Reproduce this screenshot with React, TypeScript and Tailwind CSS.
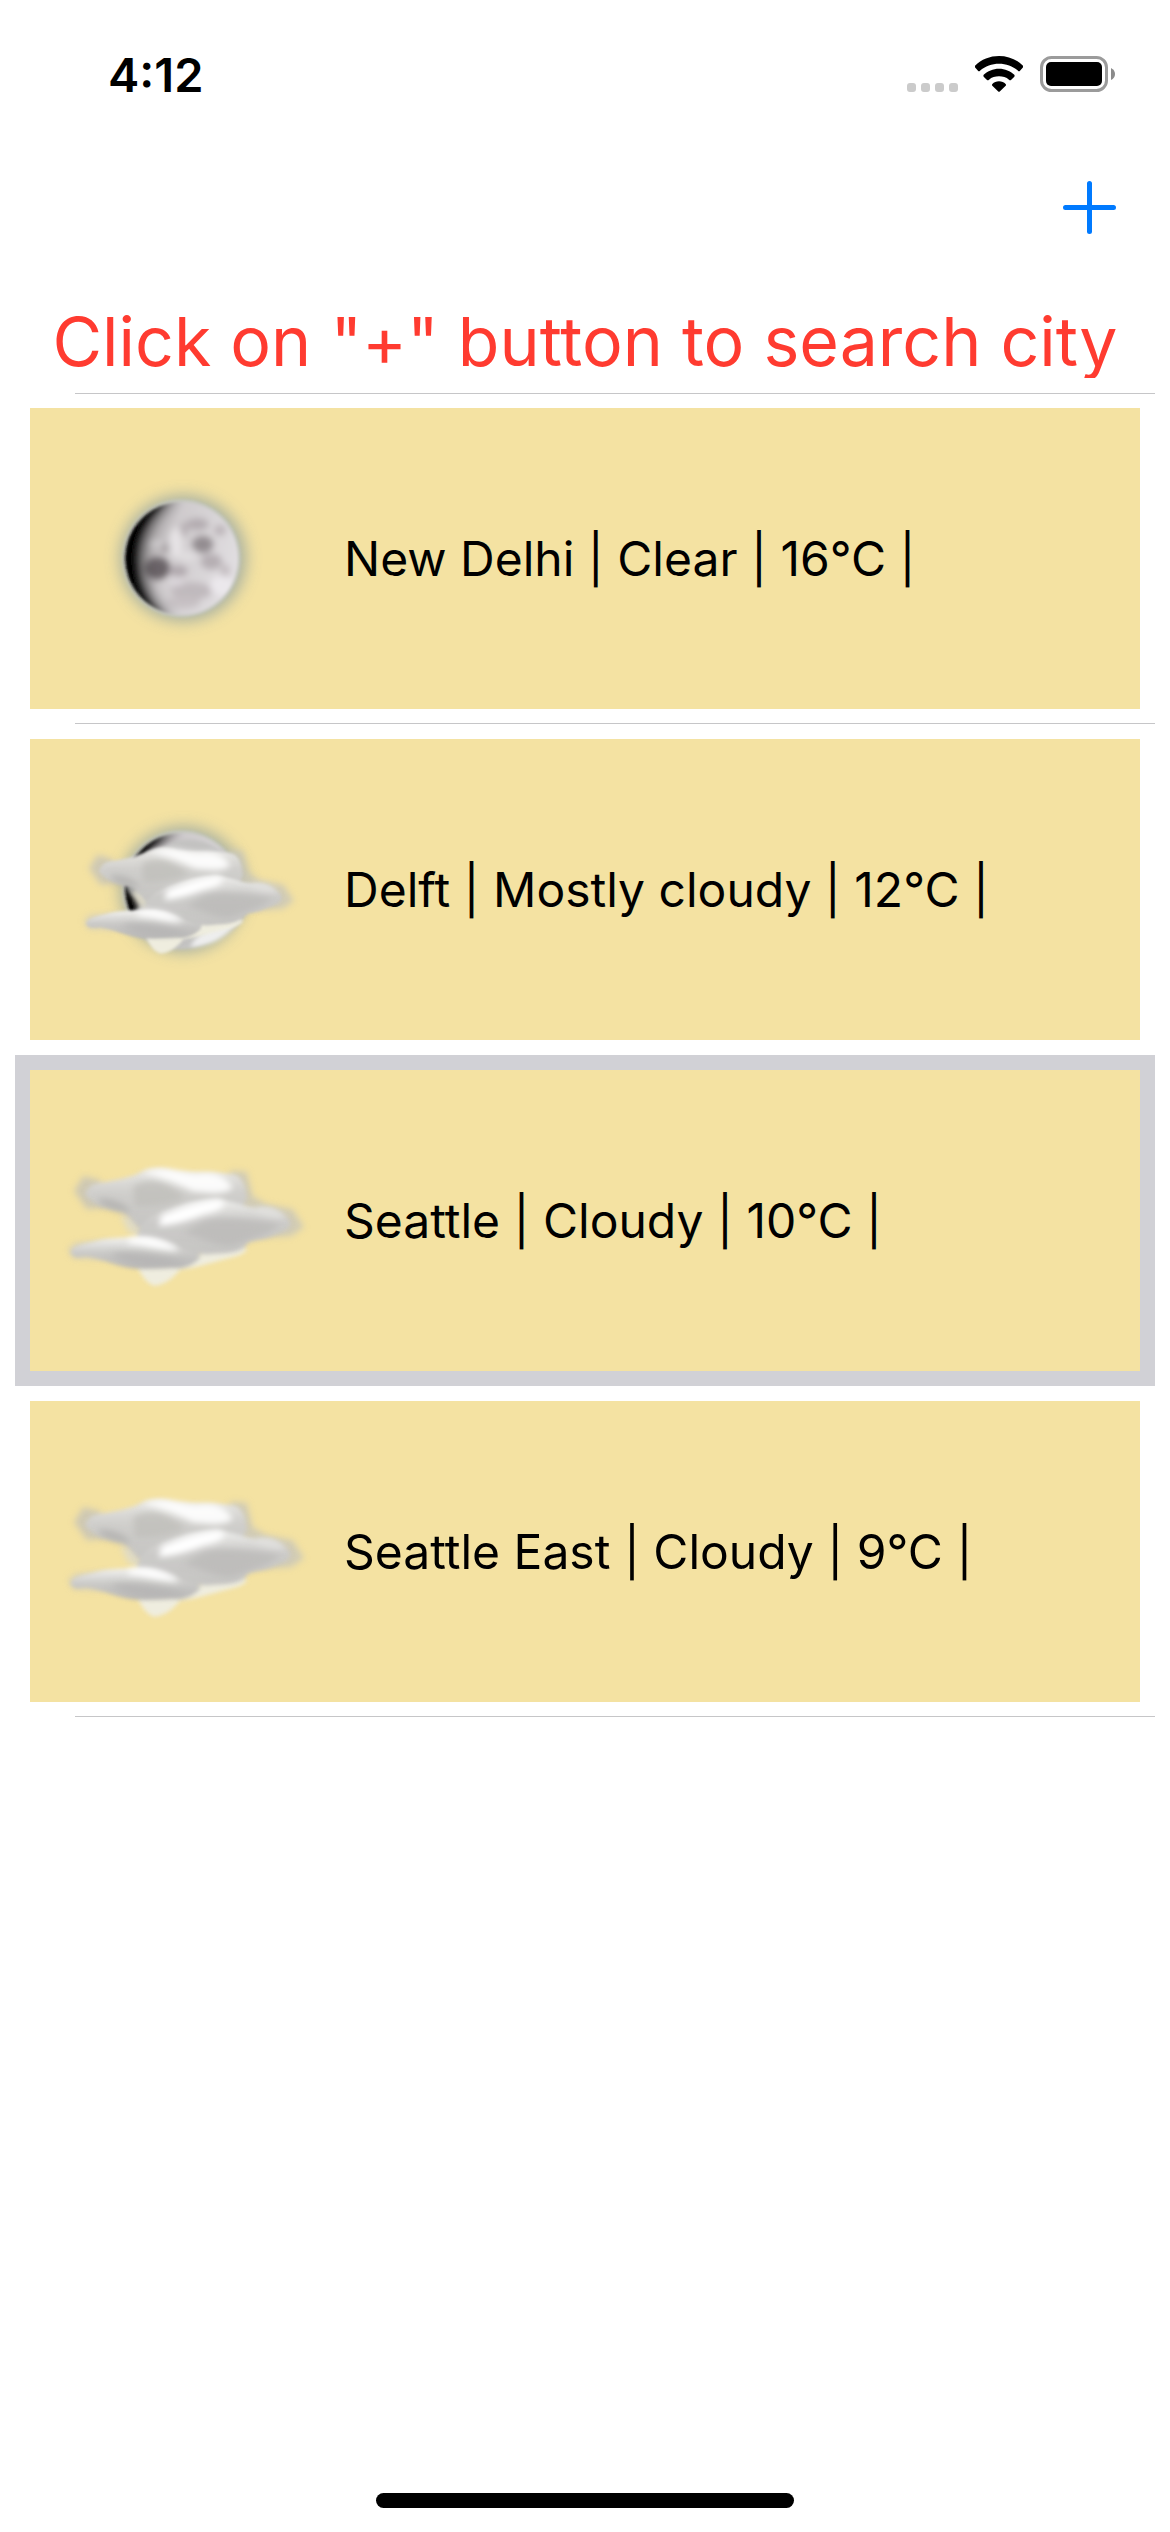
import React from "react";

type Condition = "clear" | "mostlyCloudy" | "cloudy";

const cities: { text: string; condition: Condition; selected: boolean; divider: boolean }[] = [
  { text: "New Delhi | Clear | 16°C |", condition: "clear", selected: false, divider: true },
  { text: "Delft | Mostly cloudy | 12°C |", condition: "mostlyCloudy", selected: false, divider: false },
  { text: "Seattle | Cloudy | 10°C |", condition: "cloudy", selected: true, divider: false },
  { text: "Seattle East | Cloudy | 9°C |", condition: "cloudy", selected: false, divider: true },
];

function Moon({ id }: { id: string }) {
  return (
    <g>
      <defs>
        <clipPath id={id + "disc"}>
          <circle cx="395" cy="268" r="169" />
        </clipPath>
        <linearGradient id={id + "face"} x1="0" y1="0.3" x2="1" y2="0.6">
          <stop offset="0" stopColor="#8d898a" />
          <stop offset="0.4" stopColor="#cfcbcd" />
          <stop offset="1" stopColor="#e2dfe2" />
        </linearGradient>
        <filter id={id + "halo"} x="-30%" y="-30%" width="160%" height="160%">
          <feGaussianBlur stdDeviation="22" />
        </filter>
        <filter id={id + "edge"} x="-20%" y="-20%" width="140%" height="140%">
          <feGaussianBlur stdDeviation="4" />
        </filter>
        <filter id={id + "spots"} x="-40%" y="-40%" width="180%" height="180%">
          <feGaussianBlur stdDeviation="10" />
        </filter>
        <filter id={id + "shade"} x="-40%" y="-40%" width="180%" height="180%">
          <feGaussianBlur stdDeviation="22" />
        </filter>
      </defs>
      <circle cx="399" cy="268" r="190" fill="#8fa0a2" opacity="0.75" filter={`url(#${id}halo)`} />
      <circle cx="395" cy="268" r="177" fill="#c9cbc4" opacity="0.8" filter={`url(#${id}edge)`} />
      <g filter={`url(#${id}edge)`}>
        <g clipPath={`url(#${id}disc)`}>
          <rect x="220" y="90" width="350" height="350" fill={`url(#${id}face)`} />
          <g filter={`url(#${id}spots)`}>
            <ellipse cx="458" cy="226" rx="32" ry="26" fill="#938c90" />
            <ellipse cx="442" cy="166" rx="34" ry="18" fill="#b3acb0" />
            <ellipse cx="510" cy="184" rx="18" ry="16" fill="#bbb4b8" />
            <ellipse cx="402" cy="182" rx="12" ry="22" fill="#b7b0b4" />
            <ellipse cx="484" cy="278" rx="32" ry="24" fill="#b5aeb2" />
            <ellipse cx="525" cy="305" rx="14" ry="20" fill="#c3bcc0" />
            <ellipse cx="322" cy="298" rx="38" ry="34" fill="#6a6467" />
            <ellipse cx="385" cy="306" rx="28" ry="17" fill="#b0a8ad" />
            <ellipse cx="425" cy="366" rx="62" ry="26" fill="#c0b9bd" />
            <ellipse cx="400" cy="400" rx="50" ry="18" fill="#c6c0c3" />
            <ellipse cx="345" cy="236" rx="20" ry="15" fill="#a8a2a5" />
            <ellipse cx="378" cy="222" rx="20" ry="46" fill="#e6e3e5" />
            <ellipse cx="414" cy="262" rx="28" ry="16" fill="#e0dddf" />
            <ellipse cx="378" cy="338" rx="24" ry="13" fill="#dcd7db" />
            <ellipse cx="318" cy="224" rx="24" ry="12" fill="#cfccce" />
            <ellipse cx="516" cy="350" rx="36" ry="30" fill="#ebe8ec" />
          </g>
          <path
            d="M375 80H205V460H365C305 410 272 350 270 276C268 205 300 140 375 80Z"
            fill="#000"
            opacity="0.85"
            filter={`url(#${id}shade)`}
          />
          <path d="M345 95H205V450H340C272 390 256 340 254 276C252 200 280 150 345 95Z" fill="#000" filter={`url(#${id}spots)`} />
        </g>
      </g>
    </g>
  );
}

function Clouds({ id }: { id: string }) {
  return (
    <g>
      <defs>
        <linearGradient id={id + "top"} x1="0" y1="0" x2="0" y2="1">
          <stop offset="0" stopColor="#eae9e6" />
          <stop offset="0.35" stopColor="#d0cfcc" />
          <stop offset="1" stopColor="#c2c1bf" />
        </linearGradient>
        <linearGradient id={id + "mid"} x1="0" y1="0" x2="0" y2="1">
          <stop offset="0" stopColor="#eeeeec" />
          <stop offset="0.4" stopColor="#cccbc9" />
          <stop offset="1" stopColor="#c6c5c3" />
        </linearGradient>
        <linearGradient id={id + "low"} x1="0" y1="0" x2="0" y2="1">
          <stop offset="0" stopColor="#f1f1ef" />
          <stop offset="0.5" stopColor="#c9c8c6" />
          <stop offset="1" stopColor="#b8b7b6" />
        </linearGradient>
        <filter id={id + "soft"} x="-20%" y="-20%" width="140%" height="140%">
          <feGaussianBlur stdDeviation="6" />
        </filter>
        <filter id={id + "wisp"} x="-20%" y="-20%" width="140%" height="140%">
          <feGaussianBlur stdDeviation="10" />
        </filter>
        <filter id={id + "light"} x="-30%" y="-60%" width="160%" height="220%">
          <feGaussianBlur stdDeviation="10" />
        </filter>
      </defs>
      <g filter={`url(#${id}wisp)`}>
        <path d="M72 150L100 105L150 118L170 200L110 205Z" fill="#c6c3b8" opacity="0.8" />
        <path d="M540 90L590 92L608 165L650 190L728 205L762 258L725 285L640 290L540 210Z" fill="#c8c5ba" opacity="0.8" />
        <path d="M55 325L75 305L180 300L160 355L70 352Z" fill="#cfccc0" opacity="0.7" />
        <path d="M210 220L262 230L280 290L235 272Z" fill="#dedac8" opacity="0.9" />
      </g>
      <g filter={`url(#${id}soft)`}>
        <path
          d="M255 368C300 360 350 372 390 372C430 366 460 325 500 320L592 322C585 345 540 350 505 360C460 372 430 382 390 386C370 410 345 432 312 434C285 425 275 400 255 368Z"
          fill="#efeddf"
        />
        <path
          d="M105 160C115 132 135 126 160 124C190 118 225 112 255 102C285 84 330 74 370 90C420 98 500 92 550 100C580 108 588 140 590 175L560 225L300 285C262 270 250 232 215 212C170 204 130 192 105 160Z"
          fill={`url(#${id}top)`}
        />
        <path
          d="M262 290C260 240 310 225 345 210C400 188 460 172 510 176C550 180 580 196 620 200C660 196 690 208 718 238C730 262 700 272 670 282C640 298 610 298 592 305C588 328 545 338 500 338C450 345 400 335 350 320C320 310 285 300 262 290Z"
          fill={`url(#${id}mid)`}
        />
        <path
          d="M62 332C70 312 110 308 145 298C190 288 240 290 290 290C340 294 370 312 400 325C430 335 455 338 450 350C435 368 410 382 380 382C350 378 290 388 245 382C190 374 150 352 110 346C85 350 65 350 62 332Z"
          fill={`url(#${id}low)`}
        />
      </g>
      <g filter={`url(#${id}light)`}>
        <path d="M250 135C300 108 350 120 405 170C370 190 290 200 255 195Z" fill="#bfbdb9" opacity="0.75" />
        <path d="M140 175C180 165 225 185 245 215C200 215 160 205 140 175Z" fill="#b0afad" opacity="0.75" />
        <path d="M455 245C510 218 590 235 690 250C650 285 600 292 545 315C490 315 450 285 400 275Z" fill="#b9b8b7" opacity="0.7" />
        <path d="M180 340C240 325 310 342 410 362C350 380 240 380 180 340Z" fill="#b3b2b1" opacity="0.75" />
        <path d="M275 95C350 72 390 96 440 98C490 90 525 102 548 140C520 165 470 154 430 152C390 132 340 108 275 95Z" fill="#fff" opacity="0.9" />
        <path d="M335 222C410 192 450 184 505 176C550 190 500 212 460 220C420 236 380 252 325 255Z" fill="#fff" />
        <path d="M235 292C290 282 350 296 388 328C340 332 300 312 235 306Z" fill="#fff" />
        <path d="M610 205C650 190 690 205 710 230C680 232 640 225 610 205Z" fill="#e2e1de" opacity="0.8" />
      </g>
    </g>
  );
}

function CloudVeil({ id }: { id: string }) {
  return (
    <g>
      <defs>
        <filter id={id + "blur"} x="-20%" y="-20%" width="140%" height="140%">
          <feGaussianBlur stdDeviation="7" />
        </filter>
      </defs>
      <g filter={`url(#${id}blur)`}>
        <path
          d="M262 172C290 158 310 148 340 142C380 112 440 112 480 132C530 155 560 190 565 230L590 340C560 385 520 420 460 435C400 455 330 450 280 410L225 370L262 330C278 318 272 300 248 285C230 250 240 200 262 172Z"
          fill="#c3c2c1"
        />
        <path d="M420 440C450 390 500 365 560 360C540 405 490 438 420 440Z" fill="#eeeeee" />
        <path d="M262 180L240 210L232 270L250 290L275 240Z" fill="#96999a" />
      </g>
    </g>
  );
}

function WeatherIcon({ condition, id }: { condition: Condition; id: string }) {
  return (
    <svg className="h-[180px] w-[270px] shrink-0" viewBox="0 0 810 540" role="img" aria-label={condition}>
      {condition !== "cloudy" && <Moon id={id + "m"} />}
      {condition === "mostlyCloudy" && (
        <g>
          <CloudVeil id={id + "v"} />
          <g transform="translate(53 70) scale(.89 .9)">
            <Clouds id={id + "c"} />
          </g>
        </g>
      )}
      {condition === "cloudy" && (
        <g transform="translate(0 30)">
          <Clouds id={id + "c"} />
        </g>
      )}
    </svg>
  );
}

function StatusBar() {
  return (
    <div className="flex h-[132px] items-start justify-between pt-[50px] pr-[54px] pl-[108px]">
      <time className="text-[47px] leading-[50px] font-semibold">4:12</time>
      <div className="flex h-[48px] items-center">
        <div className="mt-[26px] mr-[17px] flex gap-[5px]">
          <i className="size-[9px] rounded-[3px] bg-[#cbcbcb]" />
          <i className="size-[9px] rounded-[3px] bg-[#cbcbcb]" />
          <i className="size-[9px] rounded-[3px] bg-[#cbcbcb]" />
          <i className="size-[9px] rounded-[3px] bg-[#cbcbcb]" />
        </div>
        <svg className="mr-[17px] h-[36px] w-[48px]" viewBox="0 0 144 108" aria-label="Wi-Fi">
          <path d="M72 0C99 0 125 10 144 29Q146 32 143 35L135 44Q132 47 129 44C113 30 93 23 72 23S31 30 15 44Q12 47 9 44L1 35Q-2 32 0 29C19 10 45 0 72 0Z" />
          <path d="M72 38C90 38 106 45 118 56Q120 59 118 62L108 72Q105 74 102 71C94 64 83 61 72 61S50 64 42 71Q39 74 36 72L26 62Q24 59 26 56C38 45 54 38 72 38Z" />
          <path d="M72 76C80 76 87 79 92 84Q94 87 92 89L75 106Q72 109 69 106L52 89Q50 87 52 84C57 79 64 76 72 76Z" />
        </svg>
        <svg className="h-[36px] w-[76px]" viewBox="0 0 76 36" aria-label="Battery">
          <rect x="1.5" y="1.5" width="65" height="33" rx="10" fill="none" stroke="#9b9b9b" strokeWidth="3" />
          <rect x="6" y="6" width="56" height="24" rx="5" />
          <path d="M71 12Q75 14 75 18T71 24Z" fill="#8b8b8b" />
        </svg>
      </div>
    </div>
  );
}

export default function App() {
  return (
    <div className="flex min-h-screen flex-col bg-white font-['Inter',sans-serif] text-black">
      <StatusBar />
      <header className="flex h-[150px] items-center justify-end pr-[54px]">
        <button type="button" aria-label="Add city">
          <svg className="size-[53px]" viewBox="0 0 53 53" fill="none" stroke="#007aff" strokeWidth="5" strokeLinecap="round">
            <path d="M26.500 2.500V50.500M2.500 26.500H50.500" />
          </svg>
        </button>
      </header>
      <main className="px-[15px]">
        <h1 className="mt-[22px] mb-[15px] h-[74px] overflow-hidden text-center text-[68px] leading-[74px] whitespace-nowrap text-[#ff3b30]">
          Click on "+" button to search city
        </h1>
        <div className="-mb-px ml-[60px] h-px bg-[#c6c6c8]" />
        <ul>
          {cities.map((city, i) => (
            <li key={city.text}>
              <div className={city.selected ? "bg-[#d1d1d6] p-[15px]" : "p-[15px]"}>
                <div className="flex h-[301px] items-center gap-6 bg-[#f4e2a2] pl-5">
                  <WeatherIcon condition={city.condition} id={"w" + i} />
                  <p className="text-[48px] leading-[60px] whitespace-nowrap">{city.text}</p>
                </div>
              </div>
              {city.divider && <div className="-mt-px ml-[60px] h-px bg-[#c6c6c8]" />}
            </li>
          ))}
        </ul>
      </main>
      <footer className="mt-auto flex justify-center pb-6">
        <div className="h-[15px] w-[418px] rounded-full bg-black" />
      </footer>
    </div>
  );
}
